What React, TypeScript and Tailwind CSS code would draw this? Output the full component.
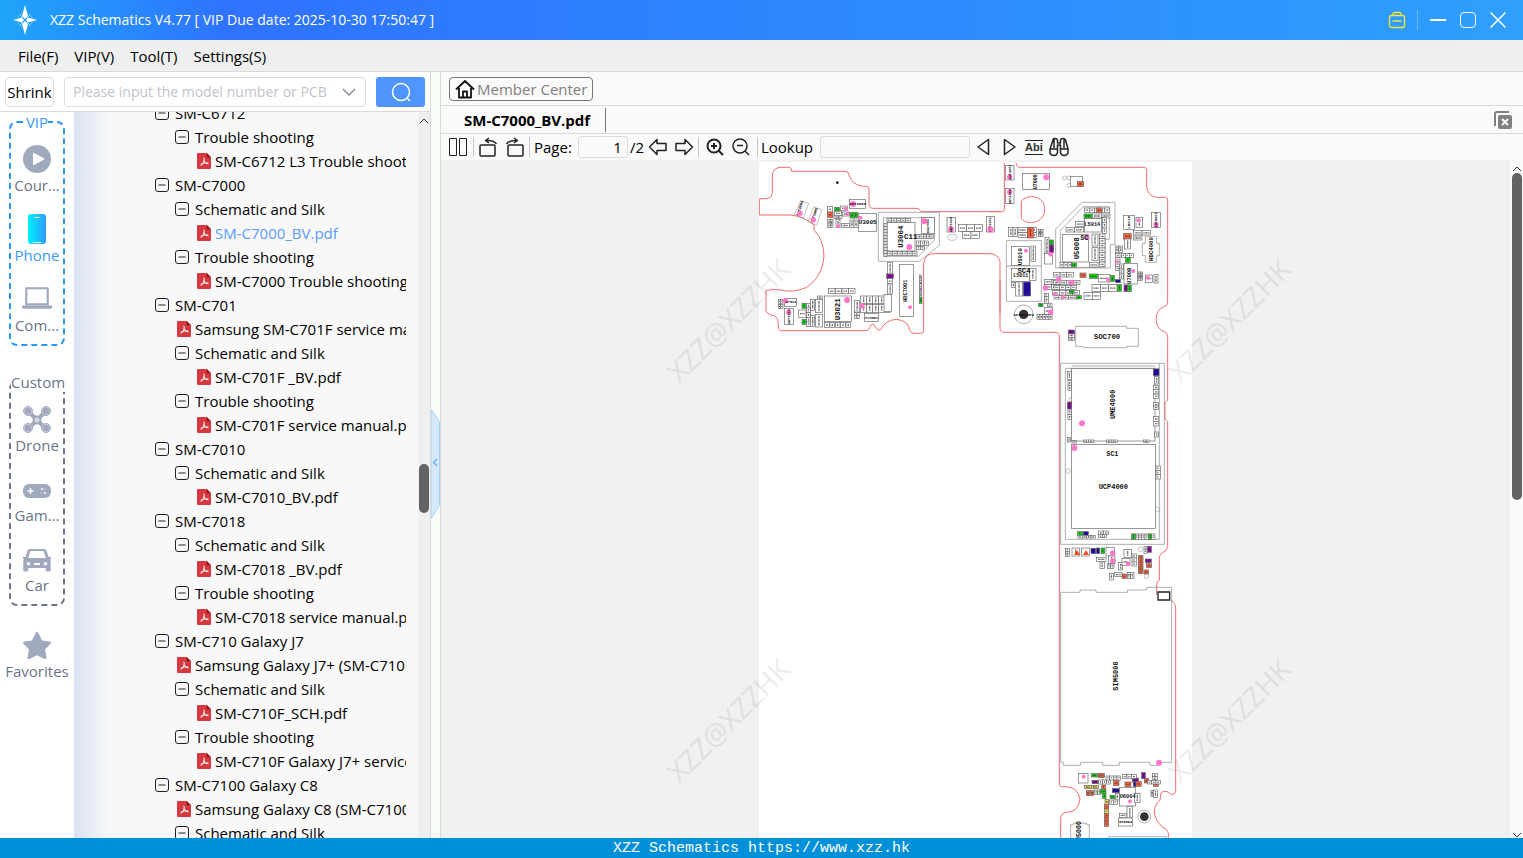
import type { ReactNode } from "react";

type Level = 0 | 1 | 2;
type TreeNode = { level: Level; label: string; pdf?: boolean; active?: boolean };

const TREE: TreeNode[] = [
  { level: 0, label: "SM-C6712" },
  { level: 1, label: "Trouble shooting" },
  { level: 2, label: "SM-C6712 L3 Trouble shooting.pdf", pdf: true },
  { level: 0, label: "SM-C7000" },
  { level: 1, label: "Schematic and Silk" },
  { level: 2, label: "SM-C7000_BV.pdf", pdf: true, active: true },
  { level: 1, label: "Trouble shooting" },
  { level: 2, label: "SM-C7000 Trouble shooting.pdf", pdf: true },
  { level: 0, label: "SM-C701" },
  { level: 1, label: "Samsung SM-C701F service manual.pdf", pdf: true },
  { level: 1, label: "Schematic and Silk" },
  { level: 2, label: "SM-C701F _BV.pdf", pdf: true },
  { level: 1, label: "Trouble shooting" },
  { level: 2, label: "SM-C701F service manual.pdf", pdf: true },
  { level: 0, label: "SM-C7010" },
  { level: 1, label: "Schematic and Silk" },
  { level: 2, label: "SM-C7010_BV.pdf", pdf: true },
  { level: 0, label: "SM-C7018" },
  { level: 1, label: "Schematic and Silk" },
  { level: 2, label: "SM-C7018 _BV.pdf", pdf: true },
  { level: 1, label: "Trouble shooting" },
  { level: 2, label: "SM-C7018 service manual.pdf", pdf: true },
  { level: 0, label: "SM-C710 Galaxy J7" },
  { level: 1, label: "Samsung Galaxy J7+ (SM-C710F)", pdf: true },
  { level: 1, label: "Schematic and Silk" },
  { level: 2, label: "SM-C710F_SCH.pdf", pdf: true },
  { level: 1, label: "Trouble shooting" },
  { level: 2, label: "SM-C710F Galaxy J7+ service manual.pdf", pdf: true },
  { level: 0, label: "SM-C7100 Galaxy C8" },
  { level: 1, label: "Samsung Galaxy C8 (SM-C7100)", pdf: true },
  { level: 1, label: "Schematic and Silk" },
];

const INDENT: Record<Level, string> = {
  0: "pl-[81px]",
  1: "pl-[101px]",
  2: "pl-[121px]",
};

function Toggle() {
  return (
    <svg viewBox="0 0 14 14" className="h-[14px] w-[14px]" fill="none" stroke="#222" aria-hidden="true">
      <rect x="0.5" y="0.5" width="13" height="13" rx="2.5" />
      <path d="M3.5 7h7" />
    </svg>
  );
}

function PdfIcon() {
  return (
    <svg viewBox="0 0 42 48" className="ml-[2px] h-4 w-[14px]" aria-hidden="true">
      <path d="M3 0h26l13 13v32q0 3-3 3H3q-3 0-3-3V3q0-3 3-3z" fill="#d43a40" />
      <path d="M29 0l13 13H31q-2 0-2-2z" fill="#8e1519" />
      <path
        d="M20 15q3 0 2 6-1 7-9 16M21 24q2 6 12 9M12 33q9-5 21-3"
        fill="none"
        stroke="#fff"
        strokeWidth="3"
        strokeLinecap="round"
      />
    </svg>
  );
}

function Tree() {
  return (
    <ul className="-mt-[11px] w-[332px] overflow-hidden">
      {TREE.map((n, i) => (
        <li key={i} className={`flex h-6 items-center ${INDENT[n.level]}`}>
          {n.pdf ? (
            <a
              href="#"
              className={`flex items-center whitespace-nowrap ${n.active ? "text-[#5b9bff]" : "text-black"}`}
            >
              <span className="w-5 shrink-0">
                <PdfIcon />
              </span>
              {n.label}
            </a>
          ) : (
            <button className="flex items-center whitespace-nowrap">
              <span className="w-5 shrink-0">
                <Toggle />
              </span>
              {n.label}
            </button>
          )}
        </li>
      ))}
    </ul>
  );
}

function Icon({ children, className = "h-7 w-7" }: { children: ReactNode; className?: string }) {
  return (
    <svg viewBox="0 0 28 28" className={className} fill="#a0a9be" aria-hidden="true">
      {children}
    </svg>
  );
}

const CourseIcon = (
  <Icon>
    <circle cx="14" cy="14" r="14" />
    <path d="M10 8.5q0-1 1-.5l10 5.2q.8.8 0 1.5l-10 5.3q-1 .4-1-.6z" fill="#fff" />
  </Icon>
);

const PhoneIcon = (
  <svg viewBox="0 0 18 30" className="h-[30px] w-[18px]" aria-hidden="true">
    <defs>
      <linearGradient id="phone" x1="0" x2="1">
        <stop offset="0" stopColor="#00f0ff" />
        <stop offset="1" stopColor="#2e9dff" />
      </linearGradient>
    </defs>
    <rect width="18" height="30" rx="3" fill="url(#phone)" />
    <path d="M7 3.5h4M5 28.5h8" stroke="#fff" strokeLinecap="round" />
  </svg>
);

const ComputerIcon = (
  <Icon className="h-[30px] w-[30px]">
    <path d="M4 3h20q1 0 1 1v16H3V4q0-1 1-1zm1 2v13h18V5z" fillRule="evenodd" />
    <path d="M0 20h28v1.500q0 1.500-1.500 1.500h-25Q0 23 0 21.500z" />
  </Icon>
);

const DroneIcon = (
  <Icon>
    <path d="M6 7l16 16M22 7L6 23" stroke="#a0a9be" strokeWidth="4" />
    <circle cx="14" cy="15" r="4.500" />
    {[
      [5, 6],
      [23, 6],
      [5, 23],
      [23, 23],
    ].map(([x, y]) => (
      <g key={`${x}-${y}`}>
        <circle cx={x} cy={y} r="4.500" fill="#d9dde6" stroke="#a0a9be" strokeWidth="1" />
        <circle cx={x} cy={y} r="3.500" />
      </g>
    ))}
    <circle cx="14" cy="15" r="2" fill="none" stroke="#fff" strokeWidth="0.800" />
    <path d="M14 14v2M13 15h2" stroke="#fff" strokeWidth="0.600" />
  </Icon>
);

const GameIcon = (
  <Icon>
    <rect y="9" width="28" height="14" rx="6" />
    <path d="M4.500 16h6M7.500 13v6" stroke="#fff" strokeWidth="1.500" />
    <circle cx="19" cy="14" r="1" fill="#fff" />
    <circle cx="22" cy="18" r="1" fill="#fff" />
    <circle cx="18" cy="18" r="0.600" fill="#fff" />
    <circle cx="22" cy="14" r="0.600" fill="#fff" />
  </Icon>
);

const CarIcon = (
  <Icon>
    <path
      fillRule="evenodd"
      d="M7 4h14q2 0 2.500 1.500L25.500 12H28v2l-1 .5q.7 1 .7 2.500v8q0 1.500-1.500 1.500h-2q-1.500 0-1.500-1.500v-2H5.300v2q0 1.500-1.500 1.500h-2Q.3 26.500.3 25v-8q0-1.500.7-2.500L0 14v-2h2.500l2-6.500Q5 4 7 4zm.3 2L5.200 13h17.600L20.700 6zM5.500 17a1.800 1.800 0 100 3.600 1.800 1.800 0 000-3.600zm17 0a1.800 1.800 0 100 3.600 1.800 1.800 0 000-3.600zM11 18v2h6v-2z"
    />
  </Icon>
);

const StarIcon = (
  <Icon>
    <path d="M12.500 2q1.500-2 3 0l3.500 7.500 7.500 1q2.500.6.8 2.600L22 18.500l1.500 7.700q.2 2.500-2 1.700L14 24.200l-7.500 3.700q-2.200.8-2-1.700L6 18.500.7 13.100q-1.700-2 .8-2.600l7.500-1z" />
  </Icon>
);

function SideItem({ icon, label, active }: { icon: ReactNode; label: string; active?: boolean }) {
  return (
    <button className={`flex h-[70px] w-full flex-col items-center pt-[13px] ${active ? "text-[#3a9bf5]" : "text-[#6b7488]"}`}>
      <span className="flex h-7 items-center justify-center">{icon}</span>
      <span className="mt-[2px] leading-5">{label}</span>
    </button>
  );
}

function SideBar() {
  return (
    <nav className="flex w-[74px] shrink-0 flex-col items-center bg-white">
      <fieldset className="w-14 min-w-0 rounded-lg border-2 border-dashed border-[#2b97f5] pb-[2px]">
        <legend className="mx-auto leading-5 text-[#3a9bf5]">VIP</legend>
        <SideItem icon={CourseIcon} label="Cour..." />
        <SideItem icon={PhoneIcon} label="Phone" active />
        <SideItem icon={ComputerIcon} label="Com..." />
      </fieldset>
      <fieldset className="mt-[26px] w-14 min-w-0 rounded-lg border-2 border-dashed border-[#6b7488] pb-[2px]">
        <legend className="mx-auto leading-5 text-[#6b7488]">Custom</legend>
        <SideItem icon={DroneIcon} label="Drone" />
        <SideItem icon={GameIcon} label="Gam..." />
        <SideItem icon={CarIcon} label="Car" />
      </fieldset>
      <div className="mt-3 w-full">
        <SideItem icon={StarIcon} label="Favorites" />
      </div>
    </nav>
  );
}

/* ---------- board drawing ---------- */

// x, y, width, height, fill (drawn at three units per pixel)
type Part = [number, number, number, number, string?];
type Dot = [number, number, number];
// x, y, size, label, vertical
type Label = [number, number, number, string, boolean?];

const G = "#12d912";
const P = "#8a0ca8";
const N = "#2208a8";
const O = "#ff6440";
const Y = "#f0e060";

function row(x: number, y: number, n: number, w: number, h: number, step = w): Part[] {
  return Array.from({ length: n }, (_, i) => [x + i * step, y, w, h] as Part);
}

function col(x: number, y: number, n: number, w: number, h: number, step = h): Part[] {
  return Array.from({ length: n }, (_, i) => [x, y + i * step, w, h] as Part);
}

function Sector({
  x,
  y,
  parts,
  dots,
  labels,
  children,
}: {
  x: number;
  y: number;
  parts: Part[];
  dots: Dot[];
  labels: Label[];
  children?: ReactNode;
}) {
  return (
    <g transform={`translate(${x} ${y}) scale(0.33333)`}>
      {children}
      {parts.map(([px, py, w, h, fill], i) => {
        const small = Math.min(w, h) <= 22;
        const mx = px + w / 2;
        const my = py + h / 2;
        return (
          <g key={i}>
            <rect x={px} y={py} width={w} height={h} fill={fill ?? "#fff"} stroke="#666" strokeWidth="2" />
            {small &&
              (w >= h ? (
                <path d={`M${px + 4} ${my}H${px + w - 4}`} stroke="#222" strokeWidth="4" strokeDasharray="3 1" opacity="0.700" />
              ) : (
                <path d={`M${mx} ${py + 4}V${py + h - 4}`} stroke="#222" strokeWidth="4" strokeDasharray="3 1" opacity="0.700" />
              ))}
          </g>
        );
      })}
      {dots.map(([cx, cy, r], i) => (
        <circle key={i} cx={cx} cy={cy} r={r} fill="#ff77cc" />
      ))}
      {labels.map(([lx, ly, size, text, vertical], i) => (
        <text
          key={i}
          x={lx}
          y={ly}
          fontSize={size}
          textAnchor="middle"
          dominantBaseline="central"
          transform={vertical ? `rotate(-90 ${lx} ${ly})` : undefined}
          fill="#111"
          fontWeight="bold"
          fontFamily="'Liberation Mono', monospace"
        >
          {text}
        </text>
      ))}
    </g>
  );
}

const RED = { fill: "none", stroke: "#f46a6a", strokeWidth: 3 };
const GREY = { fill: "none", stroke: "#888", strokeWidth: 2 };

const NW_PARTS: Part[] = [
  [299, 118, 47, 27],
  [232, 140, 16, 16],
  [232, 156, 17, 17, O],
  ...row(233, 178, 2, 8, 25),
  [254, 142, 15, 11, G],
  [254, 154, 20, 12],
  [252, 166, 24, 10],
  [258, 178, 12, 24],
  [272, 138, 20, 13],
  [278, 156, 20, 12],
  [274, 190, 24, 13],
  [300, 157, 12, 17, G],
  [312, 157, 11, 17, G],
  [300, 180, 12, 22],
  [312, 180, 12, 22],
  [325, 160, 55, 54],
  [411, 188, 84, 85],
  ...col(402, 190, 11, 9, 9),
  ...row(411, 176, 5, 14, 10),
  ...row(412, 274, 6, 14, 13, 15),
  [515, 173, 38, 48],
  ...row(500, 223, 5, 10, 13),
  ...row(500, 243, 3, 12, 14),
  ...row(500, 259, 2, 12, 9),
  [591, 172, 25, 44],
  [709, 170, 25, 46],
  ...row(626, 194, 3, 24, 21),
  ...row(638, 215, 2, 25, 21),
  [413, 307, 15, 35],
  [410, 342, 20, 13, P],
  [413, 356, 15, 15],
  [413, 372, 15, 30],
  [448, 314, 42, 155],
  ...col(508, 345, 4, 7, 17),
  [508, 413, 8, 17, G],
  [224, 408, 80, 76],
  ...row(224, 487, 5, 14, 15, 16),
  [103, 415, 36, 24],
  ...row(85, 418, 2, 7, 12),
  ...row(85, 434, 2, 7, 12),
  [103, 446, 27, 48],
  [156, 430, 12, 15, G],
  [156, 478, 12, 15, G],
  [146, 450, 22, 22],
  ...col(170, 430, 5, 11, 14),
  [182, 418, 12, 33],
  [197, 418, 20, 40],
  [182, 467, 12, 33],
  [197, 464, 20, 37],
  ...row(203, 408, 1, 14, 9),
  ...row(332, 408, 5, 18, 23),
  ...row(332, 433, 5, 18, 24),
  [314, 421, 15, 35],
  ...col(314, 458, 2, 14, 9),
  [344, 461, 41, 23],
  ...row(236, 386, 4, 19, 15, 20),
  [402, 404, 23, 51],
];

const NE_PARTS: Part[] = [
  [47, 17, 25, 43],
  [47, 85, 25, 45],
  [97, 41, 82, 47],
  [242, 49, 35, 30],
  [262, 64, 19, 16, O],
  ...row(56, 203, 2, 13, 26),
  ...row(84, 203, 2, 28, 14),
  ...row(84, 218, 2, 28, 14),
  [112, 202, 18, 32, O],
  ...row(145, 208, 2, 7, 22),
  [284, 176, 50, 40],
  ...row(283, 144, 5, 15, 13),
  [320, 144, 16, 14, O],
  [282, 162, 24, 12, G],
  ...row(308, 162, 2, 26, 12),
  ...row(256, 185, 1, 26, 15),
  ...row(228, 203, 2, 26, 13),
  [218, 224, 78, 82],
  [306, 222, 18, 36],
  [306, 262, 18, 40],
  ...col(328, 222, 7, 17, 14),
  ...col(337, 172, 3, 13, 16),
  ...row(210, 308, 3, 12, 14),
  [244, 309, 16, 12, G],
  [298, 308, 26, 13],
  [65, 260, 54, 56],
  [123, 258, 14, 46],
  [65, 325, 54, 39],
  [119, 325, 19, 36],
  [65, 368, 10, 14],
  [76, 366, 22, 42],
  [100, 366, 22, 42, N],
  [165, 233, 12, 55],
  [178, 240, 13, 15, G],
  [178, 255, 13, 23, P],
  [163, 280, 24, 32],
  ...row(163, 358, 2, 23, 15),
  ...row(163, 374, 2, 22, 14),
  ...row(190, 338, 3, 20, 13),
  ...row(190, 362, 4, 20, 11),
  ...row(192, 376, 4, 17, 12),
  ...row(188, 392, 4, 20, 13),
  ...row(192, 407, 3, 22, 10),
  [270, 339, 18, 14, O],
  [298, 342, 25, 14, G],
  [325, 344, 35, 22],
  [362, 346, 11, 19, G],
  [376, 359, 16, 9, N],
  [238, 390, 14, 10, G],
  [260, 407, 14, 10, G],
  ...row(306, 374, 3, 25, 21),
  [382, 373, 13, 21, G],
  [402, 375, 11, 20, P],
  [413, 375, 11, 20, G],
  ...row(282, 397, 2, 25, 21),
  ...col(163, 400, 3, 12, 10),
  [145, 430, 14, 10, G],
  [172, 430, 14, 9],
  [163, 442, 24, 22],
  ...row(141, 464, 5, 9, 14),
  [401, 167, 33, 42],
  [438, 172, 20, 30],
  [485, 158, 26, 44],
  [401, 220, 23, 17, O],
  [404, 237, 18, 30],
  ...row(430, 212, 2, 26, 13),
  ...row(430, 228, 1, 26, 12),
  ...row(376, 258, 2, 10, 20, 11),
  ...col(376, 280, 4, 14, 13),
  ...row(394, 280, 3, 12, 12),
  [406, 292, 15, 16, G],
  [402, 310, 40, 62],
  ...row(444, 336, 2, 7, 26),
  [466, 345, 22, 22],
  [492, 344, 12, 25],
  ...col(388, 312, 3, 12, 15),
  [235, 510, 18, 12, P],
  ...col(235, 522, 2, 18, 10),
];

const CPU_PARTS: Part[] = [
  [65, 55, 250, 218],
  [65, 283, 252, 253],
  [310, 57, 17, 20, N],
  [52, 64, 12, 24],
  ...col(54, 92, 2, 10, 15),
  [52, 156, 13, 21, P],
  ...col(54, 180, 2, 10, 14),
  [52, 262, 10, 14],
  [314, 80, 12, 22],
  ...col(311, 106, 3, 15, 13),
  ...col(311, 158, 2, 15, 10),
  ...col(311, 200, 2, 15, 14),
  [314, 246, 12, 15],
  ...col(318, 348, 3, 13, 13),
  [66, 271, 14, 8],
  ...row(100, 270, 2, 16, 8),
  ...row(170, 270, 2, 16, 8),
  [280, 270, 17, 8],
  [83, 545, 16, 11, G],
  [100, 545, 15, 11, N],
  ...row(84, 556, 4, 13, 8),
  ...row(146, 543, 2, 15, 11),
  ...row(146, 554, 2, 12, 9),
  ...row(245, 552, 7, 10, 16),
  [246, 552, 10, 16, G],
  [295, 552, 10, 16, G],
  ...col(46, 596, 3, 12, 8),
  [66, 594, 22, 24],
  [94, 594, 24, 24],
  [123, 595, 14, 16, N],
  [139, 594, 10, 17, N],
  [153, 594, 11, 17, G],
  [168, 592, 26, 26],
  [175, 618, 20, 22],
  ...row(172, 642, 2, 10, 14),
  ...row(140, 622, 1, 28, 12),
  [150, 636, 13, 20],
  [222, 598, 22, 24],
  [206, 638, 12, 22],
  [216, 626, 24, 20],
  ...col(246, 612, 3, 13, 12),
  [292, 589, 12, 18, P],
  [286, 627, 18, 11, P],
  ...col(265, 616, 5, 14, 11).map((p): Part => [p[0], p[1], p[2], p[3], O]),
  [289, 641, 16, 12, O],
  [282, 660, 14, 12, O],
  [216, 672, 14, 14, O],
  [178, 670, 12, 20],
  [194, 668, 22, 12],
  ...row(232, 668, 2, 10, 18),
  [282, 590, 9, 20],
];

const SOUTH_PARTS: Part[] = [
  [86, 521, 28, 28],
  [124, 521, 18, 10, G],
  [144, 520, 9, 13, O],
  [154, 520, 9, 13, O],
  [126, 541, 18, 10, P],
  ...row(146, 540, 3, 12, 12),
  [104, 556, 20, 10, Y],
  [125, 556, 20, 10, Y],
  [155, 555, 12, 12, O],
  [109, 572, 10, 15, O],
  [121, 572, 10, 15, O],
  ...row(134, 570, 2, 9, 14),
  [150, 568, 18, 12, G],
  [158, 580, 10, 16, G],
  [165, 598, 11, 15, Y],
  ...col(163, 614, 5, 13, 13).map((p, i): Part => [p[0], p[1], p[2], p[3], i === 1 ? Y : O]),
  ...row(168, 528, 4, 11, 12),
  [190, 541, 17, 16, O],
  [187, 566, 22, 12, N],
  [180, 586, 16, 10, G],
  [208, 562, 48, 56],
  [225, 546, 18, 14, O],
  [247, 534, 18, 12, P],
  [250, 546, 8, 14, N],
  [258, 545, 16, 14, O],
  [275, 518, 11, 18, P],
  [283, 535, 12, 14, O],
  [311, 546, 14, 13, O],
  ...row(217, 524, 3, 14, 12),
  ...row(292, 542, 3, 13, 10),
  ...col(308, 521, 2, 14, 9),
  [196, 580, 12, 20],
  [254, 580, 16, 28],
  [303, 572, 6, 18],
  [311, 570, 11, 22],
  [231, 620, 17, 34],
  [206, 654, 42, 24],
  [208, 640, 22, 12],
  ...row(178, 600, 2, 12, 14),
];

function Board() {
  return (
    <svg viewBox="759 162 433 676" className="h-[676px] w-[433px] shrink-0 bg-white" role="img" aria-label="SM-C7000 board view">
      <Sector
        x={750}
        y={160}
        parts={NW_PARTS}
        dots={[
          [309, 132, 9],
          [150, 160, 8],
          [190, 179, 8],
          [288, 146, 6],
          [293, 162, 6],
          [264, 199, 6],
          [331, 173, 6],
          [523, 184, 9],
          [478, 261, 9],
          [603, 208, 9],
          [721, 208, 9],
          [480, 442, 6],
          [291, 420, 9],
          [106, 422, 8],
          [116, 457, 8],
          [336, 438, 8],
        ]}
        labels={[
          [353, 188, 18, "U3005"],
          [453, 230, 22, "U3004", true],
          [482, 232, 22, "C11"],
          [265, 448, 22, "U3021", true],
          [468, 392, 16, "HDC7001", true],
          [123, 427, 11, "U7012"],
          [365, 473, 11, "CV3001"],
          [323, 132, 12, "ANT3008"],
          [603, 194, 11, "ANT3006", true],
          [721, 194, 11, "ANT3001", true],
          [116, 470, 11, "ANT3009", true],
          [534, 198, 10, "OSC7002", true],
        ]}
      >
        <path
          {...RED}
          d="M750 155H513Q510 146 498 145H370Q357 145 357 130V88Q357 80 350 79H340Q305 75 297 45Q296 34 285 34H125Q125 22 118 22H90Q70 24 67 45V98Q66 115 50 115L28 117V165H120Q160 168 192 195V210Q222 240 222 290Q218 350 170 382Q130 400 90 390Q70 385 48 392V455Q60 468 75 468Q85 475 85 490V505Q88 512 95 512H345Q358 512 358 503Q368 482 378 503Q382 512 392 510Q405 480 440 478Q475 482 480 512Q484 520 490 520H513Q521 520 521 512V310Q525 282 550 281H720Q745 282 750 305V460"
        />
        <path {...GREY} d="M385 157H568V256L508 304H385zM400 173H553V240L506 289H400z" />
        <circle cx="262" cy="68" r="4" fill="#222" />
        <g {...GREY} strokeWidth="1.500">
          <path d="M152 122l24 8-16 44-27-10zM191 141l25 8-16 46-26-10z" />
          <ellipse cx="607" cy="232" rx="14" ry="9" />
        </g>
        <text x="153" y="146" fontSize="11" fontWeight="bold" textAnchor="middle" transform="rotate(-72 153 146)" fontFamily="'Liberation Mono', monospace">
          ANT3004
        </text>
        <text x="196" y="166" fontSize="11" fontWeight="bold" textAnchor="middle" transform="rotate(-72 196 166)" fontFamily="'Liberation Mono', monospace">
          ANT3005
        </text>
      </Sector>

      <Sector
        x={990}
        y={160}
        parts={NE_PARTS}
        dots={[
          [59, 51, 8],
          [59, 96, 8],
          [169, 52, 9],
          [4, 208, 7],
          [108, 272, 6],
          [182, 283, 7],
          [291, 232, 8],
          [446, 181, 6],
          [498, 194, 8],
          [166, 384, 8],
          [206, 358, 8],
          [245, 367, 8],
          [195, 401, 6],
          [219, 411, 6],
          [182, 456, 8],
          [354, 359, 6],
          [430, 333, 6],
          [379, 306, 5],
          [474, 353, 6],
        ]}
        labels={[
          [138, 65, 15, "U7009", true],
          [307, 196, 16, "L5014"],
          [260, 265, 22, "U5008", true],
          [283, 235, 20, "SC"],
          [93, 290, 17, "U5010", true],
          [102, 334, 22, "SC4"],
          [92, 346, 15, "L5011"],
          [417, 187, 13, "L5015", true],
          [484, 267, 17, "HDC4000", true],
          [419, 347, 16, "U7008", true],
          [351, 532, 22, "SOC700"],
          [101, 463, 13, "SCREW002"],
          [59, 36, 11, "ANT4001", true],
          [59, 110, 11, "ANT4000", true],
          [498, 180, 11, "ANT5002", true],
        ]}
      >
        <path
          {...RED}
          d="M0 155H38Q43 155 43 148V8M78 8Q80 22 90 22H462Q470 24 470 30V78Q472 108 500 112H527Q533 113 533 120V425Q533 438 522 440Q500 448 498 478Q500 508 525 516Q533 520 533 530V570M30 360V505Q30 517 45 517H195Q208 517 208 530V570M94 124C112 100 164 106 164 148S112 198 94 176Z"
        />
        <path {...GREY} d="M276 127H375V254H361V324H197V207zM280 140H358V238H345V322H211V212zM49 242H154V424H49zM257 499H410V505H445V559H410V563H280V559H257zM466 229H500V250H508V287H500V307H466V287H457V250H466zM49 318H154" />
        <circle cx="101" cy="463" r="28" {...GREY} />
        <circle cx="101" cy="463" r="14" fill="#333" />
        <g {...GREY} strokeWidth="1.500">
          <circle cx="223" cy="54" r="6" />
          <circle cx="237" cy="54" r="6" />
          <circle cx="237" cy="76" r="6" />
        </g>
      </Sector>

      <Sector
        x={1050}
        y={350}
        parts={CPU_PARTS}
        dots={[
          [96, 220, 9],
          [73, 294, 9],
          [188, 609, 8],
          [188, 632, 8],
          [234, 642, 7],
        ]}
        labels={[
          [190, 163, 21, "UME4000", true],
          [187, 313, 20, "SC1"],
          [190, 411, 21, "UCP4000"],
        ]}
      >
        <path {...RED} d="M353 0V150L345 158V207L353 215V590Q352 602 335 610Q328 615 328 625V690Q320 695 320 705V735" />
        <path {...RED} d="M28 0V750" />
        <path {...GREY} d="M32 40H343V583H32zM46 55H328V568H46zM65 48H315M328 40V55" />
        <path {...GREY} d="M32 752V727H90V720H138V727H232V720H290V712H365V752" />
        <path d="M324 726H359V750H324z" fill="#fff" stroke="#222" strokeWidth="4" />
        <g {...GREY} strokeWidth="1.500">
          <circle cx="64" cy="149" r="7" />
          <circle cx="54" cy="363" r="7" />
          <circle cx="323" cy="478" r="7" />
          <circle cx="271" cy="598" r="7" />
          <circle cx="289" cy="678" r="7" />
        </g>
      </Sector>
      <path d="M1074 555l3-5 3 5zM1083 555l3-5 3 5z" fill="#ff4a20" />

      <Sector
        x={1050}
        y={600}
        parts={SOUTH_PARTS}
        dots={[
          [327, 488, 9],
          [101, 530, 6],
          [240, 604, 6],
        ]}
        labels={[
          [197, 228, 21, "SIM5000", true],
          [233, 591, 16, "U6004"],
          [227, 666, 11, "IC6004"],
          [88, 693, 20, "U5000", true],
        ]}
      >
        <path
          {...RED}
          d="M362 0Q377 8 377 25V575Q375 585 362 583Q352 570 338 575Q330 578 331 598Q310 620 313 640Q318 670 350 690Q357 697 357 718M28 0V555Q30 562 45 560Q85 560 90 598Q85 637 50 637Q32 640 32 655V718"
        />
        <path {...GREY} d="M32 0V487H40V496H92V487H158V496H208V487H300V496H325V487H365V0M62 718V674H70V670H110V674H118V718M176 718V710H350V718" />
        <circle cx="283" cy="650" r="19" {...GREY} />
        <circle cx="283" cy="650" r="13" fill="#333" />
      </Sector>
    </svg>
  );
}

const WATERMARKS = [
  [287, 160],
  [788, 160],
  [287, 560],
  [788, 560],
];

/* ---------- toolbar ---------- */

function Tool({ label, children }: { label: string; children: ReactNode }) {
  return (
    <button aria-label={label} className="shrink-0">
      <svg viewBox="0 0 20 20" className="h-5 w-5" fill="none" stroke="#222" strokeWidth="1.500" strokeLinejoin="round">
        {children}
      </svg>
    </button>
  );
}

function Divider() {
  return <span className="h-5 w-px shrink-0 bg-[#c8c8c8]" />;
}

function ToolBar() {
  return (
    <div className="flex h-[26px] items-center bg-[#fafafa] pl-[7px]">
      <Tool label="Two pages">
        <path d="M1.500 1.500h7v17h-7zM11.500 1.500h7v17h-7z" strokeWidth="1" />
      </Tool>
      <span className="ml-[5px] flex items-center">
        <Divider />
      </span>
      <span className="ml-1 flex items-center gap-[7px]">
        <Tool label="Rotate left">
          <rect x="2" y="8" width="15" height="11" rx="1" />
          <path d="M18.500 7Q16 3 8 3.500M11 1L7.500 3.500 11 6" />
        </Tool>
        <Tool label="Rotate right">
          <rect x="3" y="8" width="15" height="11" rx="1" />
          <path d="M1.500 7Q4 3 12 3.500M9 1l3.500 2.500L9 6" />
        </Tool>
      </span>
      <span className="ml-1 flex items-center">
        <Divider />
      </span>
      <label htmlFor="page" className="ml-1">
        Page:
      </label>
      <input
        id="page"
        defaultValue="1"
        className="ml-[6px] h-[22px] w-[50px] rounded-[3px] border border-[#dcdcdc] bg-[#fafafa] pr-[5px] text-right"
      />
      <span className="ml-[2px] w-[18px]">/2</span>
      <span className="flex items-center gap-[6px]">
        <Tool label="Previous page">
          <path d="M1.500 10L9 2.500v4h9v7H9v4z" />
        </Tool>
        <Tool label="Next page">
          <path d="M18.500 10L11 2.500v4H2v7h9v4z" />
        </Tool>
      </span>
      <span className="ml-1 flex items-center gap-[6px]">
        <Divider />
        <Tool label="Zoom in">
          <circle cx="9" cy="9" r="6.500" strokeWidth="2" />
          <path d="M13.500 13.500L18 18M6 9h6M9 6v6" strokeWidth="2" />
        </Tool>
        <Tool label="Zoom out">
          <circle cx="9" cy="9" r="7" />
          <path d="M14 14l4 4M6 8.500h6" />
        </Tool>
        <Divider />
      </span>
      <label htmlFor="lookup" className="ml-[3px]">
        Lookup
      </label>
      <input id="lookup" className="ml-[7px] h-[22px] w-[150px] rounded-[3px] border border-[#dcdcdc] bg-[#fafafa] px-1" />
      <span className="ml-[3px] flex items-center gap-[6px]">
        <Tool label="Find previous">
          <path d="M15.500 2.500v15L5 10z" />
        </Tool>
        <Tool label="Find next">
          <path d="M5.500 2.500v15L16 10z" />
        </Tool>
        <button className="h-[15px] border-y border-[#222] font-['Liberation_Sans',sans-serif] text-[11px] leading-[13px] font-bold text-[#333]">Abi</button>
        <Tool label="Search document">
          <path d="M4 3q0-1.500 2-1.500T8.500 3v3h3V3q.5-1.500 2.500-1.500T16.500 3l2.500 9v4q-1 2.500-4 2.500t-3.500-3V8h-3v7.500Q8 18.500 5 18.500T1 16v-4zM1.500 12h7M11.500 12h7M5 2v9M15 2v9" />
        </Tool>
      </span>
    </div>
  );
}

function ScrollArrow({ down }: { down?: boolean }) {
  return (
    <svg viewBox="0 0 10 6" className={`h-[6px] w-[10px] shrink-0 ${down ? "rotate-180" : ""}`} fill="none" stroke="#333" aria-hidden="true">
      <path d="M1 5l4-4 4 4" />
    </svg>
  );
}

export default function App() {
  return (
    <div className="flex h-screen flex-col overflow-hidden bg-[#fafafa] font-['Open_Sans','Noto_Sans',sans-serif] text-[15px] leading-5 text-black">
      <header className="flex h-10 shrink-0 items-center bg-linear-to-r from-[#1fa5fa] via-[#2f72ff] via-15% to-[#2f9ffc] pl-3 text-white">
        <svg viewBox="0 0 26 30" className="h-[30px] w-[26px]" fill="#fff" aria-hidden="true">
          <circle cx="13" cy="15" r="7.500" fill="none" stroke="#8fd0ff" strokeWidth="1" opacity="0.600" />
          <path d="M13 0l3 11-3 3-3-3zM13 30l3-11-3-3-3 3zM1 15l9-2.500 2 2.500-2 2.500zM25 15l-9-2.500-2 2.500 2 2.500z" />
          <path d="M8 10l3 3M18 10l-3 3M8 20l3-3M18 20l-3-3" stroke="#cfeaff" strokeWidth="0.700" />
        </svg>
        <h1 className="ml-3 text-[14px]">XZZ Schematics V4.77 [ VIP Due date: 2025-10-30 17:50:47 ]</h1>
        <div className="mr-[17px] ml-auto flex items-center gap-[14px]">
          <button aria-label="Toolbox" className="mr-[-3px]">
            <svg viewBox="0 0 18 18" className="h-[18px] w-[18px]" fill="none" stroke="#f0e63c" strokeWidth="1.300">
              <rect x="1.500" y="4.500" width="15" height="12" rx="2" />
              <path d="M5 4.500V3q0-1.500 1.500-1.500h5Q13 1.500 13 3v1.500M4.500 10h9" />
            </svg>
          </button>
          <span className="h-5 w-px bg-[#6db8ff]" />
          <button aria-label="Minimize" className="-ml-[2px]">
            <span className="block h-[2px] w-4 bg-white" />
          </button>
          <button aria-label="Maximize">
            <span className="block h-4 w-4 rounded border-[1px] border-white" />
          </button>
          <button aria-label="Close">
            <svg viewBox="0 0 16 16" className="h-4 w-4" stroke="#fff" strokeWidth="1.500">
              <path d="M.5.5l15 15M15.500.5l-15 15" />
            </svg>
          </button>
        </div>
      </header>

      <nav className="flex h-8 shrink-0 items-center gap-4 border-b border-[#dadada] bg-[#efefef] pl-[18px]">
        <button>File(F)</button>
        <button>VIP(V)</button>
        <button>Tool(T)</button>
        <button>Settings(S)</button>
      </nav>

      <div className="flex min-h-0 flex-1">
        <aside className="flex w-[431px] shrink-0 flex-col border-r border-[#dadada]">
          <div className="flex h-10 shrink-0 items-center border-b border-[#dadada] bg-white pl-[5px]">
            <button className="h-[30px] w-[49px] rounded border border-[#dcdcdc]">Shrink</button>
            <div className="ml-[10px] flex h-[30px] w-[302px] items-center rounded border border-[#dcdcdc] pr-[9px] pl-2">
              <input
                aria-label="Model number"
                placeholder="Please input the model number or PCB"
                className="min-w-0 flex-1 text-[14px] placeholder:text-[#bfc4cc]"
              />
              <button aria-label="Show history" className="ml-2">
                <svg viewBox="0 0 14 8" className="h-2 w-[14px]" fill="none" stroke="#8a8f98" strokeWidth="1.500">
                  <path d="M1 1l6 6 6-6" />
                </svg>
              </button>
            </div>
            <button aria-label="Search" className="ml-[10px] flex h-[30px] w-[49px] items-center justify-center rounded-[3px] bg-[#4f94ff]">
              <svg viewBox="0 0 20 20" className="h-5 w-5" fill="none" stroke="#fff" strokeWidth="1.500">
                <circle cx="10" cy="10" r="8.500" />
                <path d="M16 16l3 3" />
              </svg>
            </button>
          </div>
          <div className="flex min-h-0 flex-1 overflow-hidden">
            <SideBar />
            <div className="min-w-0 flex-1 overflow-hidden bg-linear-to-r from-[#d9e2f1] to-[#f8f8f8] to-10%">
              <Tree />
            </div>
            <div className="flex w-3 shrink-0 flex-col items-center bg-[#efefef] pt-[6px]">
              <ScrollArrow />
              <span className="mt-[340px] h-[49px] w-[10px] rounded-full bg-[#636363]" />
            </div>
          </div>
        </aside>

        <button aria-label="Collapse side panel" className="flex w-[10px] shrink-0 items-center border-r border-[#dadada] bg-[#f8fdf8]">
          <svg viewBox="0 0 9 110" className="mt-[18px] h-[110px] w-[9px]" fill="#d6e9fd" stroke="#a8cef5">
            <path d="M0 .5L8.500 13v83L0 109.500z" />
            <path d="M6 50L2.500 53.500 6 57" fill="none" stroke="#5aaef5" strokeWidth="1.300" />
          </svg>
        </button>

        <main className="flex min-w-0 flex-1 flex-col bg-[#fafafa]">
          <div className="flex h-[34px] shrink-0 items-center border-b border-[#dadada] pl-2">
            <button className="flex h-6 items-center rounded border border-[#777] px-[5px] text-[#808080]">
              <svg viewBox="0 0 20 20" className="mr-[2px] h-5 w-5" fill="none" stroke="#111" strokeWidth="1.800" strokeLinejoin="round">
                <path d="M1 10.500L10 2l9 8.500M4 9v9.500h12V9M8 18v-5.500h4V18" />
              </svg>
              Member Center
            </button>
          </div>
          <div className="flex h-7 shrink-0 items-center border-b border-[#dadada] pr-[11px]">
            <button className="h-6 border-r border-[#777] pr-[15px] pl-[23px] font-bold">SM-C7000_BV.pdf</button>
            <button aria-label="Close all tabs" className="ml-auto">
              <svg viewBox="0 0 18 18" className="h-[18px] w-[18px]" aria-hidden="true">
                <path d="M1 15V3q0-2 2-2h12" fill="none" stroke="#808080" strokeWidth="2" />
                <rect x="4" y="4" width="14" height="14" rx="2" fill="#808080" />
                <path d="M8 8l6 6M14 8l-6 6" stroke="#fff" strokeWidth="1.800" />
              </svg>
            </button>
          </div>
          <ToolBar />
          <div className="flex min-h-0 flex-1">
            <div className="relative flex min-w-0 flex-1 items-start justify-center overflow-hidden bg-[#f1f1f1] pt-[2px]">
              <Board />
              <svg className="pointer-events-none absolute inset-0 h-full w-full">
                {WATERMARKS.map(([x, y]) => (
                  <text
                    key={`${x}-${y}`}
                    x={x}
                    y={y}
                    transform={`rotate(-45 ${x} ${y})`}
                    textAnchor="middle"
                    dominantBaseline="central"
                    fontSize="28"
                    fill="#000"
                    opacity="0.070"
                  >
                    XZZ@XZZHK
                  </text>
                ))}
              </svg>
            </div>
            <div className="flex w-[13px] shrink-0 flex-col items-center pt-[6px]">
              <ScrollArrow />
              <span className="mt-px h-[327px] w-[10px] rounded-full bg-[#636363]" />
              <span className="mt-auto">
                <ScrollArrow down />
              </span>
            </div>
          </div>
        </main>
      </div>

      <footer className="h-5 shrink-0 bg-[#0090d9] text-center font-['Liberation_Mono',monospace] leading-[22px] text-white">
        XZZ Schematics https://www.xzz.hk
      </footer>
    </div>
  );
}
